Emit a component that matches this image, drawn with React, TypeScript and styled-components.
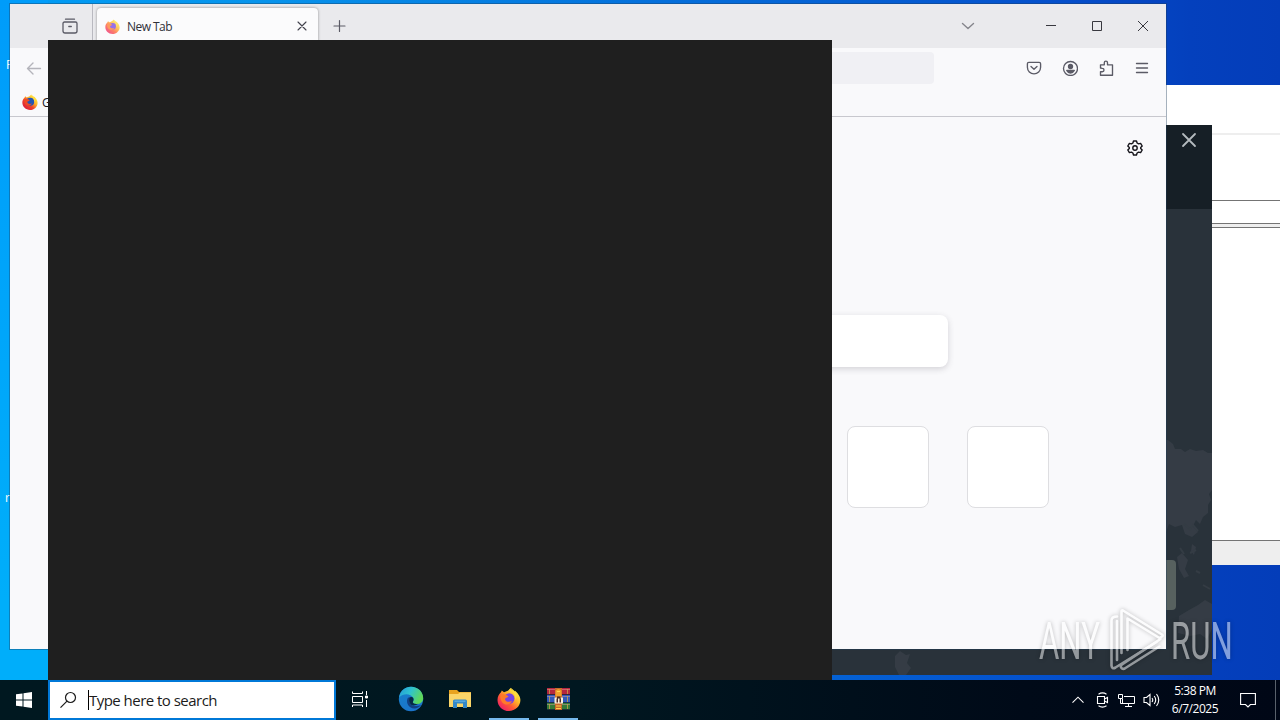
import type { ReactNode } from "react";
import styled, { createGlobalStyle } from "styled-components";

const GlobalStyle = createGlobalStyle`
  * {
    box-sizing: border-box;
  }

  body {
    margin: 0;
    overflow: hidden;
    font-family: "Open Sans", "Noto Sans", sans-serif;
  }

  svg {
    display: block;
    flex-shrink: 0;
  }
`;

type IconProps = {
  size?: number;
  width?: number;
  color?: string;
  children: ReactNode;
};

function Icon({ size = 16, width = 1.35, color = "#5b5b66", children }: IconProps) {
  return (
    <svg
      width={size}
      height={size}
      viewBox={`0 0 ${size} ${size}`}
      fill="none"
      stroke={color}
      strokeWidth={width}
      strokeLinecap="round"
      strokeLinejoin="round"
    >
      {children}
    </svg>
  );
}

function FirefoxLogo({ size, faded }: { size: number; faded?: boolean }) {
  const id = `fox${size}`;
  const small = size === 16;

  return (
    <svg width={size} height={size} viewBox="0 0 24 24" opacity={faded ? 0.75 : 1}>
      <defs>
        <linearGradient id={id} x1="0.85" y1="0.1" x2="0.15" y2="0.9">
          <stop offset="0" stopColor="#fff04a" />
          <stop offset="0.35" stopColor="#ffb52a" />
          <stop offset="0.65" stopColor={small ? "#f0402a" : "#ff5a35"} />
          <stop offset="1" stopColor={small ? "#d81f3c" : "#ee2067"} />
        </linearGradient>
      </defs>
      <path
        d="M4 5.2 4.8 3.4 7 5.2 9.5 4.2C11 3.9 12 2.6 14 .8c.3 2 2 2.9 3.5 4.5l.5-1.500c2 1.800 5.400 5 5.400 9.300C23.400 19.300 18.300 24 12 24S.5 19.200.5 12.900C.5 9.500 2 7 4 5.200Z"
        fill={`url(#${id})`}
      />
      <circle cx="12.300" cy="11.500" r={small ? 6 : 5.2} fill={small ? "#2456b4" : "#7543e3"} />
      <path d="M3.500 8c3-1.500 5-.5 8 1.300-1 1.700-3.200 1.300-3.500 2.700.2 3 4.500 3.500 7 2-1.600 4-6.800 4.600-9.500 1.700C3.700 13.500 2.800 10.500 3.500 8Z" fill={small ? "#ee4b25" : "#ff7a2a"} />
      <path d="M14 1c2 6 5 6 4 12 3-4 2-7-1-9.500Z" fill="#ffdc3e" />
    </svg>
  );
}

function EdgeLogo() {
  return (
    <svg width="26" height="26" viewBox="0 0 26 26">
      <defs>
        <linearGradient id="edgeTop" x1="0" y1="0" x2="1" y2="0.4">
          <stop offset="0" stopColor="#2498d8" />
          <stop offset="0.5" stopColor="#2fc3cf" />
          <stop offset="1" stopColor="#5fd85a" />
        </linearGradient>
        <linearGradient id="edgeSide" x1="0" y1="0" x2="0.6" y2="1">
          <stop offset="0" stopColor="#1680ca" />
          <stop offset="1" stopColor="#1b74cc" />
        </linearGradient>
      </defs>
      <circle cx="13" cy="13" r="12.200" fill="url(#edgeSide)" />
      <path d="M1.200 11.500C2 5 7 .8 13 .8c7 0 12.200 5.200 12.200 11.200 0 4-3 6-6.500 6-3 0-4.400-1.200-3.800-2.200.8-1.300 1-2.600.2-4C13 7.500 5 7 1.200 11.500Z" fill="url(#edgeTop)" />
      <path d="M9.500 12.500C7.500 18 12 23.500 18 22.200c2-.4 4-1.700 5-3.200-5 2.400-11 .8-11.600-3.500-.2-2 1-3.500 2.200-4.300-1.900-.8-3.300.2-4.100 1.300Z" fill="#123f83" />
      <path d="M14.900 15.800c.8-1.300 1-2.600.2-4-.8-1.300-2.600-1-3.500.4-.9 1.500-.6 4.600 1.600 6.600 1.500 1 4.500 1.200 7-1-3.500.8-6-.6-5.300-2Z" fill="#062a45" />
    </svg>
  );
}

function FolderLogo() {
  return (
    <svg width="22" height="20" viewBox="0 0 22 20">
      <path d="M0 1h8l2 2h12v15H0Z" fill="#e8a31f" />
      <path d="M0 5h9l2-1.500h11V18H0Z" fill="#fbd568" />
      <path d="M4 12q0-1.500 1.500-1.500h11q1.500 0 1.500 1.500v7h-4v-4.500H8V19H4Z" fill="#3488c8" />
      <path d="M5.500 11.500h11v1.500h-11Z" fill="#58a8de" />
    </svg>
  );
}

function WinrarLogo() {
  return (
    <svg width="25" height="24" viewBox="0 0 25 24">
      <path d="M1 1h23v7H1Z" fill="#b3273f" />
      <path d="M1 8h23v8H1Z" fill="#3159ba" />
      <path d="M1 16h23v7H1Z" fill="#347a38" />
      <path d="M1 2.500h23M1 9.500h23M1 17.500h23" stroke="#e6a6a8" strokeOpacity="0.45" />
      <path d="M1 7.500h23M1 15.500h23M1 22.500h23" stroke="#172238" strokeOpacity="0.8" />
      <path d="M3.500 2v5M3.500 9v6M3.500 17v5M21.500 2v5M21.500 9v6M21.500 17v5" stroke="#c9a24a" strokeOpacity="0.8" />
      <path d="M9 1h7v22H9Z" fill="#c8692a" />
      <path d="M9.500 3.500q3-3 6 0v6h-6Z" fill="#f0a02c" />
      <path d="M11 4.500h3M10 19h5M10 21.500h5" stroke="#ffd24b" />
      <path d="M8.500 10.500h8.500v6H8.500Z" fill="#f8eedc" />
      <path d="M10.500 11.500h1.500v4h-1.500ZM13.500 11.500H15v4h-1.500ZM11 9.500h3.500v2H11Z" fill="#4b2b22" />
    </svg>
  );
}

function App() {
  return (
    <Desktop>
      <GlobalStyle />

      <ShortcutLabel $top={57} $left={6}>F</ShortcutLabel>
      <ShortcutLabel $top={490} $left={5}>r</ShortcutLabel>

      <ListWindow>
        <ListHeader />
        <ListToolbar />
        <ListField />
        <ListSplitter />
        <ListBody />
        <ListStatus />
      </ListWindow>

      <MapWindow>
        <MapHeader>
          <Icon size={16} width={1.8} color="#b4babe">
            <path d="m2 2 12 12M14 2 2 14" />
          </Icon>
        </MapHeader>
        <MapBody>
          <svg width="412" height="466" viewBox="800 209 412 466">
            <path
              d="M1160 440h8l5 4 2 5 6 0 4 3 5-3 6 2 7-1 5 3h4v37l-3 4 2 6-3 5v8l-5 4-3 7-4-4-3 6 5 6-6 5-7-3-3-9-7 2-6-3-4 11-5 8-5-4-3 10-6 1ZM1177 557l5-4 6 7-3 9 4 7-5 2-5-9ZM1192 544l4 3-2 8-3-4ZM1179 616l10-6 9-5 7-5 7 4v25l-5 10-7-5-10 2-12-3ZM895 656l5-5 6 4 4-1-3 9 4 5-5 7h-7l-4-8Z"
              fill="#353c45"
            />
            <path
              d="m1184 524 6 5 3-4 5 6M1180 548l4 6M1190 553l6-3M1203 585l7 4M1196 571l4 2"
              fill="none"
              stroke="#343c44"
              strokeWidth="2"
            />
          </svg>
          <MapButton />
        </MapBody>
      </MapWindow>

      <Browser>
        <TabBar>
          <ViewButton>
            <Icon size={18} width={1.3}>
              <path d="M4.500 2.200h9M3.500 5h11q1.500 0 1.500 1.500v7.500q0 2-2 2h-10q-2 0-2-2v-7.500Q2 5 3.500 5ZM7.800 9.500h2.500" />
            </Icon>
          </ViewButton>
          <Tab>
            <FirefoxLogo size={15} faded />
            <TabTitle>New Tab</TabTitle>
            <Icon size={10} width={1.1} color="#42424c">
              <path d="m1 1 8 8M9 1 1 9" />
            </Icon>
          </Tab>
          <NewTabButton>
            <Icon size={14} width={1.2}>
              <path d="M6.500 1.500v11M1 7h11" />
            </Icon>
          </NewTabButton>
          <TabsMenu>
            <Icon size={14} width={1.4} color="#85858c">
              <path d="m1.500 4.500 5.500 5 5.500-5" />
            </Icon>
          </TabsMenu>
          <CaptionButton>
            <svg width="12" height="12" stroke="#38383f"><path d="M1 5.500h10" /></svg>
          </CaptionButton>
          <CaptionButton>
            <svg width="12" height="12" fill="none" stroke="#38383f"><path d="M1.500 1.500h9v9h-9Z" /></svg>
          </CaptionButton>
          <CaptionButton>
            <svg width="12" height="12" stroke="#38383f"><path d="m1 1 10 10M11 1 1 11" /></svg>
          </CaptionButton>
        </TabBar>

        <NavBar>
          <Icon color="#b4b4bb">
            <path d="M14.500 8.500h-13M7 3 1.500 8.500 7 14" />
          </Icon>
          <AddressBar />
          <NavActions>
            <Icon>
              <path d="M2.800 2.300h10.400q1.400 0 1.400 1.400v3.600a6.600 6.600 0 0 1-13.200 0V3.700q0-1.400 1.400-1.400ZM5 6.500l3 2.800 3-2.800" />
            </Icon>
            <Icon>
              <circle cx="8.500" cy="8.500" r="7" />
              <circle cx="8.500" cy="6.500" r="2" fill="#5b5b66" />
              <path d="M4.700 10.500h7.600Q11 13 8.500 13t-3.800-2.500Z" fill="#5b5b66" />
            </Icon>
            <Icon>
              <path d="M2.500 8V4.800h3.800V2.700a1.600 1.600 0 0 1 3.200 0v2.100h5V15.200h-12v-3.500h1.800a1.700 1.700 0 0 0 0-3.400Z" />
            </Icon>
            <Icon>
              <path d="M2.500 3.500h11M2.500 8h11M2.500 12.500h11" />
            </Icon>
          </NavActions>
        </NavBar>

        <BookmarksBar>
          <FirefoxLogo size={16} />
          <span>Getting Started</span>
        </BookmarksBar>

        <NewTabPage>
          <Personalize>
            <Icon width={1.4} color="#15141a">
              <circle cx="8" cy="8" r="2.200" />
              <path d="m6.500 1-.6 2-1.500.9-2-.5-1.600 2.600L2.300 7.500v1L.8 10l1.600 2.600 2-.5 1.500.9.6 2h3l.6-2 1.500-.9 2 .5 1.600-2.600-1.500-1.500v-1L15.200 6l-1.600-2.600-2 .5-1.500-.9-.6-2Z" />
            </Icon>
          </Personalize>
          <SearchBox />
          <TopSites>
            <SiteTile />
            <SiteTile />
          </TopSites>
        </NewTabPage>
      </Browser>

      <SearchPanel />

      <Watermark>
        <WatermarkText $width={64}>
          <span>ANY</span>
        </WatermarkText>
        <svg width="60" height="70" viewBox="1107 605 60 70">
          <g fill="none" stroke="#fff" strokeWidth="2.600" strokeLinejoin="round" strokeLinecap="round">
            <path d="M1121.500 653v-42q0-1 1.500-.5l39 24q1.500 1 0 2l-2.500 1.500-32-19.500v31.500" />
            <path d="M1117 616.500q-5.500 0-5.500 4v45q.5 4 4 2l41-25.500M1117 621v39" />
            <path d="M1160.500 639l-38.500 25.500q-2.500 2 0 4 1.500 1 3.500-.5l34-21.500" />
          </g>
        </svg>
        <WatermarkText $width={63}>
          <span>RUN</span>
        </WatermarkText>
      </Watermark>

      <Taskbar>
        <StartButton>
          <svg width="16" height="16" fill="#fff">
            <path d="M0 2.300 6.500 1.400v6.100H0ZM7.500 1.200 16 0v7.500H7.500ZM0 8.500h6.500v6.100L0 13.700ZM7.500 8.500H16V16l-8.500-1.200Z" />
          </svg>
        </StartButton>
        <SearchField>
          <svg width="18" height="18" fill="none" stroke="#1b1b1b" strokeWidth="1.200">
            <circle cx="10.500" cy="6.500" r="5" />
            <path d="m7 10.200-6.500 6.500" />
          </svg>
          <Caret />
          <Placeholder>Type here to search</Placeholder>
        </SearchField>
        <TaskButton>
          <svg width="18" height="16" fill="none" stroke="#fff">
            <path d="M1.500.5v2h10v-2M1.500 5.500h10v6h-10ZM1.500 16v-2h10v2M15.500 0v4M15.500 9v7" />
            <path d="M14.500 5h2v2h-2Z" fill="#fff" />
          </svg>
        </TaskButton>
        <TaskButton>
          <EdgeLogo />
        </TaskButton>
        <TaskButton>
          <FolderLogo />
        </TaskButton>
        <TaskButton $running>
          <FirefoxLogo size={24} />
        </TaskButton>
        <TaskButton $running>
          <WinrarLogo />
        </TaskButton>
        <Tray>
          <svg width="12" height="8" fill="none" stroke="#fff" strokeWidth="1.100">
            <path d="m.5 6.700 5.500-5.500 5.500 5.500" />
          </svg>
          <svg width="14" height="16" fill="none" stroke="#fff" strokeWidth="1.100">
            <path d="M2.500 2.200q4-2.700 8 0M2.500 13.800q4 2.700 8 0M1.500 4.500h7v7h-7ZM8.500 7l3-1.500v5L8.500 9" />
          </svg>
          <svg width="17" height="15" fill="none" stroke="#fff">
            <path d="M6 3.500h10.500v7H4.500V6M10.500 10.500v3M7 13.500h7M.5 1.500h4v4h-4ZM2.500 5.500v5H5" />
          </svg>
          <svg width="17" height="16" fill="none" stroke="#fff" strokeWidth="1.100">
            <path d="M1 5.500h2.500L7 2.500v11l-3.500-3H1ZM9 6q1.500 2 0 4M11.200 4q3 4 0 8M13.500 2q4.500 6 0 12" />
          </svg>
        </Tray>
        <Clock>
          <span>5:38 PM</span>
          <span>6/7/2025</span>
        </Clock>
        <Notifications>
          <svg width="16" height="16" fill="none" stroke="#fff" strokeWidth="1.100">
            <path d="M.6 1.500h14.800v11h-5L8 15l-2.500-2.500H.6Z" />
          </svg>
        </Notifications>
      </Taskbar>
    </Desktop>
  );
}

const Desktop = styled.main`
  position: relative;
  width: 1280px;
  height: 720px;
  overflow: hidden;
  background:
    linear-gradient(180deg, #009cfa 0, #00aefa 600px) 0 0 / 48px 100% no-repeat,
    linear-gradient(90deg, #009cf5 0%, #0794ec 20%, #0471dc 50%, #0450cc 82%, #0440bd 93%, #043db9 100%);
`;

const ShortcutLabel = styled.span<{ $top: number; $left: number }>`
  position: absolute;
  top: ${({ $top }) => $top}px;
  left: ${({ $left }) => $left}px;
  font-size: 12px;
  line-height: 16px;
  color: #fff;
`;

const ListWindow = styled.section`
  position: absolute;
  top: 85px;
  left: 900px;
  width: 380px;
  height: 480px;
  display: flex;
  flex-direction: column;
  background-color: #fff;
`;

const ListHeader = styled.div`
  height: 50px;
  border-bottom: 2px solid #eee;
`;

const ListToolbar = styled.div`
  height: 65px;
`;

const ListField = styled.div`
  height: 24px;
  border-top: 1px solid #747474;
  border-bottom: 1px solid #747474;
`;

const ListSplitter = styled.div`
  height: 3px;
  background-color: #eee;
`;

const ListBody = styled.div`
  height: 314px;
  border-top: 1px solid #747474;
  border-bottom: 1px solid #747474;
`;

const ListStatus = styled.div`
  flex: 1;
  background-color: #eee;
`;

const MapWindow = styled.section`
  position: absolute;
  top: 125px;
  left: 800px;
  width: 412px;
  height: 550px;
  background-color: #29323a;
`;

const MapHeader = styled.header`
  display: flex;
  justify-content: flex-end;
  height: 84px;
  padding: 7px 15px;
  background-color: #161f26;
`;

const MapBody = styled.div`
  position: relative;
  height: 466px;
`;

const MapButton = styled.div`
  position: absolute;
  top: 351px;
  right: 36px;
  width: 120px;
  height: 50px;
  border-radius: 4px;
  background-color: #57615f;
`;

const Browser = styled.section`
  position: absolute;
  top: 4px;
  left: 10px;
  width: 1156px;
  height: 645px;
  display: flex;
  flex-direction: column;
  background-color: #f9f9fb;
  box-shadow: 0 0 0 1px rgba(30, 60, 90, 0.4);
`;

const TabBar = styled.header`
  display: flex;
  align-items: center;
  height: 44px;
  background-color: #eaeaed;
`;

const ViewButton = styled.div`
  display: flex;
  justify-content: flex-end;
  width: 83px;
  height: 44px;
  padding: 13px 13px 0 0;
  border-right: 1px solid #b9b9c0;
`;

const Tab = styled.div`
  display: flex;
  align-items: center;
  width: 221px;
  height: 36px;
  margin-left: 4px;
  padding: 0 11px 0 8px;
  border-radius: 4px;
  background-color: #fbfbfc;
  box-shadow: 0 0 3px rgba(0, 0, 0, 0.4);
`;

const TabTitle = styled.span`
  flex: 1;
  margin-left: 7px;
  font-size: 12px;
  letter-spacing: -0.55px;
  color: #303038;
`;

const NewTabButton = styled.div`
  margin-left: 15px;
`;

const TabsMenu = styled.div`
  margin-left: auto;
  margin-right: 53px;
`;

const CaptionButton = styled.div`
  display: flex;
  justify-content: center;
  width: 46px;
`;

const NavBar = styled.nav`
  display: flex;
  align-items: center;
  height: 40px;
  padding: 0 16px;
`;

const AddressBar = styled.div`
  width: 716px;
  height: 32px;
  margin-left: 176px;
  border-radius: 4px;
  background-color: #f0f0f4;
`;

const NavActions = styled.div`
  display: flex;
  gap: 20px;
  margin-left: auto;
`;

const BookmarksBar = styled.div`
  display: flex;
  align-items: center;
  height: 29px;
  padding-left: 12px;
  border-bottom: 1px solid #c8c8ce;
  white-space: nowrap;
  font-size: 12px;
  color: #15141a;

  span {
    margin-left: 4px;
  }
`;

const NewTabPage = styled.div`
  display: flex;
  flex: 1;
  flex-direction: column;
`;

const Personalize = styled.div`
  align-self: flex-end;
  margin: 23px 23px 0 0;
`;

const SearchBox = styled.div`
  width: 700px;
  height: 52px;
  margin: 159px 0 0 238px;
  border-radius: 8px;
  background-color: #fff;
  box-shadow: 0 2px 6px rgba(58, 57, 68, 0.2);
`;

const TopSites = styled.div`
  display: flex;
  gap: 38px;
  margin: 59px 0 0 837px;
`;

const SiteTile = styled.div`
  width: 82px;
  height: 82px;
  border: 1px solid #dedee1;
  border-radius: 8px;
  background-color: #fff;
`;

const SearchPanel = styled.div`
  position: absolute;
  top: 40px;
  left: 48px;
  width: 784px;
  height: 640px;
  background-color: #1f1f1f;
`;

const Watermark = styled.div`
  position: absolute;
  top: 605px;
  left: 1039px;
  display: flex;
  align-items: center;
  gap: 4px;
  height: 70px;
  opacity: 0.5;
  filter: drop-shadow(0 0 2px rgba(0, 0, 0, 0.5));
`;

const WatermarkText = styled.div<{ $width: number }>`
  width: ${({ $width }) => $width}px;
  height: 70px;
  color: #fff;

  span {
    display: inline-block;
    font-family: Roboto, sans-serif;
    font-size: 52px;
    font-weight: 400;
    line-height: 73px;
    transform: scaleX(0.6);
    transform-origin: left;
  }
`;

const Taskbar = styled.footer`
  position: absolute;
  bottom: 0;
  left: 0;
  display: flex;
  align-items: stretch;
  width: 1280px;
  height: 40px;
  background: linear-gradient(90deg, #001820 0%, #001720 45%, #000a18 80%, #000716 100%);
`;

const StartButton = styled.div`
  display: flex;
  align-items: center;
  justify-content: center;
  width: 48px;
`;

const SearchField = styled.div`
  display: flex;
  align-items: center;
  width: 288px;
  padding-left: 10px;
  border: 2px solid #0078d7;
  background-color: #fff;
`;

const Caret = styled.div`
  width: 1px;
  height: 20px;
  margin-left: 10px;
  background-color: #000;
`;

const Placeholder = styled.span`
  white-space: nowrap;
  font-size: 15px;
  letter-spacing: -0.53px;
  color: #1b1b1b;
`;

const TaskButton = styled.div<{ $running?: boolean }>`
  display: flex;
  align-items: center;
  justify-content: center;
  width: 40px;
  margin-right: 9px;
  border-bottom: 2px solid ${({ $running }) => ($running ? "#76b9ed" : "transparent")};

  ${SearchField} + & {
    margin: 0 11px 0 4px;
  }
`;

const Tray = styled.div`
  display: flex;
  align-items: center;
  gap: 8px;
  margin-left: auto;

  svg:first-child {
    margin-right: 4px;
  }
`;

const Clock = styled.div`
  display: flex;
  flex-direction: column;
  justify-content: center;
  width: 70px;
  text-align: center;
  font-size: 12px;
  line-height: 18px;
  letter-spacing: -0.45px;
  color: #fff;
`;

const Notifications = styled.div`
  display: flex;
  align-items: center;
  justify-content: center;
  width: 46px;
  margin-right: 4px;
  padding-right: 10px;
  border-right: 1px solid #59616b;
`;

export default App;
